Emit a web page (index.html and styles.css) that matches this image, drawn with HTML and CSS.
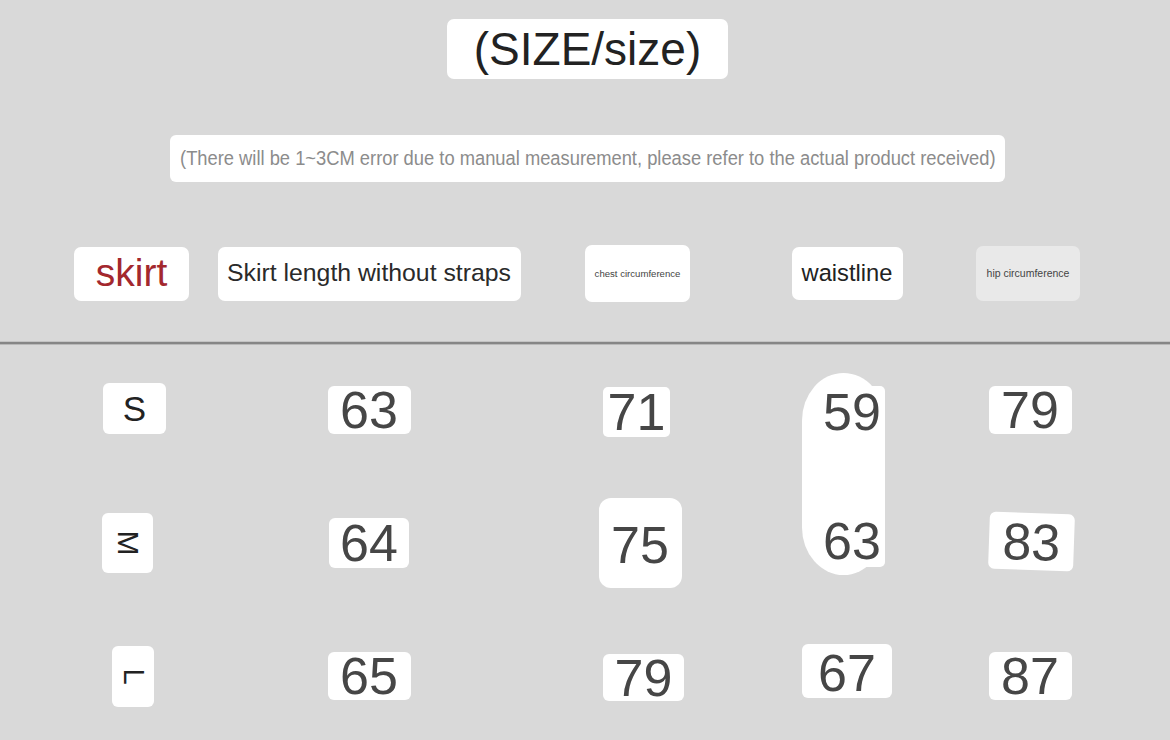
FILE: index.html
```html
<!DOCTYPE html>
<html lang="en">
<head>
<meta charset="utf-8">
<title>Size chart</title>
<link rel="stylesheet" href="styles.css">
</head>
<body>
<div class="page">
  <div class="title-row">
    <div class="title">(SIZE/size)</div>
  </div>
  <div class="note-row">
    <div class="note"><span class="note-text">(There will be 1~3CM error due to manual measurement, please refer to the actual product received)</span></div>
  </div>

  <div class="grid head">
    <div class="tag tag-skirt">skirt</div>
    <div class="tag tag-length">Skirt length without straps</div>
    <div class="tag tag-chest">chest circumference</div>
    <div class="tag tag-waist">waistline</div>
    <div class="tag tag-hip">hip circumference</div>
  </div>

  <div class="divider"></div>

  <div class="grid data">
    <div class="pill"><span class="pill-num">59</span><span class="pill-num">63</span></div>

    <div class="size size-s"><span class="size-letter">S</span></div>
    <div class="num num-a">63</div>
    <div class="num num-71">71</div>
    <div class="num num-a">79</div>

    <div class="size size-m"><span class="size-letter rot">M</span></div>
    <div class="num num-64">64</div>
    <div class="num num-75">75</div>
    <div class="num num-83">83</div>

    <div class="size size-l"><span class="size-letter rot small">L</span></div>
    <div class="num num-a">65</div>
    <div class="num num-79b">79</div>
    <div class="num num-67">67</div>
    <div class="num num-a">87</div>
  </div>
</div>
</body>
</html>
```

FILE: styles.css
```css
* { box-sizing: border-box; }

html, body {
  margin: 0;
  padding: 0;
}

body {
  background: #d9d9d9;
  font-family: "Liberation Sans", Arial, sans-serif;
  color: #222;
}

.page {
  width: 1170px;
  height: 740px;
  overflow: hidden;
  display: flex;
  flex-direction: column;
}

.page > * {
  flex-shrink: 0;
}

.title-row {
  display: flex;
  justify-content: center;
  padding-top: 19px;
  padding-left: 5px;
}

.title {
  width: 281px;
  height: 60px;
  background: #fff;
  border-radius: 7px;
  display: flex;
  align-items: center;
  justify-content: center;
  font-size: 46px;
  color: #222;
  line-height: 1;
}

.note-row {
  display: flex;
  justify-content: center;
  margin-top: 56px;
  padding-left: 5px;
}

.note {
  width: 835px;
  height: 47px;
  background: #fff;
  border-radius: 6px;
  display: flex;
  align-items: center;
  justify-content: center;
  overflow: hidden;
}

.note-text {
  display: inline-block;
  white-space: nowrap;
  font-size: 19.5px;
  color: #8c8c8c;
  transform: scaleX(0.94);
}

.grid {
  display: grid;
  grid-template-columns: 134px 338px 204px 210px 156px;
  padding-left: 66px;
  justify-items: center;
  align-items: center;
}

.head {
  margin-top: 63px;
  height: 57px;
}

.tag {
  background: #fff;
  border-radius: 7px;
  display: flex;
  align-items: center;
  justify-content: center;
  line-height: 1;
  white-space: nowrap;
}

.tag-skirt {
  width: 115px;
  height: 54px;
  font-size: 39px;
  color: #a3282e;
  padding-bottom: 2px;
  margin-right: 3px;
}

.tag-length {
  width: 303px;
  height: 54px;
  font-size: 24.8px;
  color: #2a2a2a;
}

.tag-chest {
  width: 105px;
  height: 57px;
  font-size: 9.6px;
  color: #444;
  margin-right: 5px;
}

.tag-waist {
  width: 111px;
  height: 53px;
  font-size: 23.7px;
  color: #222;
}

.tag-hip {
  width: 104px;
  height: 55px;
  font-size: 10.5px;
  color: #444;
  background: #e9e9e9;
  margin-right: 4px;
}

.divider {
  margin-top: 40px;
  height: 2px;
  background: #868686;
  box-shadow: 0 1px 0 #b8b8b8, 0 -1px 0 #c4c4c4;
}

.data {
  grid-template-rows: 132px 134px 132px;
}

.size {
  background: #fff;
  border-radius: 6px;
  display: flex;
  align-items: center;
  justify-content: center;
  line-height: 1;
  color: #222;
}

.size-s {
  width: 63px;
  height: 51px;
  font-size: 35px;
  margin-left: 3px;
  margin-top: -3px;
}

.size-m {
  width: 51px;
  height: 60px;
  font-size: 30px;
  margin-right: 11px;
}

.size-l {
  width: 42px;
  height: 61px;
  font-size: 29px;
}

.size-letter {
  display: inline-block;
}

.rot {
  transform: rotate(90deg);
}

.num {
  background: #fff;
  border-radius: 6px;
  display: flex;
  align-items: center;
  justify-content: center;
  font-size: 52px;
  line-height: 1;
  color: #464646;
  width: 83px;
  height: 48px;
}

.num-71 {
  width: 67px;
  height: 50px;
  margin-right: 7px;
  margin-top: 4px;
  border-radius: 5px;
}

.num-64 {
  width: 80px;
  height: 50px;
}

.num-75 {
  width: 83px;
  height: 90px;
  border-radius: 12px;
  padding-top: 4px;
}

.num-83 {
  width: 85px;
  height: 57px;
  transform: rotate(2deg);
  margin-top: -4px;
  margin-left: 3px;
}

.num-79b {
  width: 81px;
  height: 47px;
  margin-left: 7px;
  margin-top: 3px;
}

.num-67 {
  width: 90px;
  height: 54px;
  margin-top: -10px;
  padding-top: 4px;
}

.pill {
  grid-column: 4;
  grid-row: 1 / span 2;
  width: 83px;
  height: 202px;
  margin-right: 8px;
  margin-top: -6px;
  background: #fff;
  border-radius: 42px / 48px;
  display: flex;
  flex-direction: column;
  justify-content: space-between;
  align-items: center;
  padding: 13px 0 8px 6px;
  font-size: 52px;
  line-height: 1;
  color: #464646;
}

.pill-num {
  display: block;
  background: #fff;
  border-radius: 5px;
  padding: 0 4px;
  margin-right: -12px;
}
```
